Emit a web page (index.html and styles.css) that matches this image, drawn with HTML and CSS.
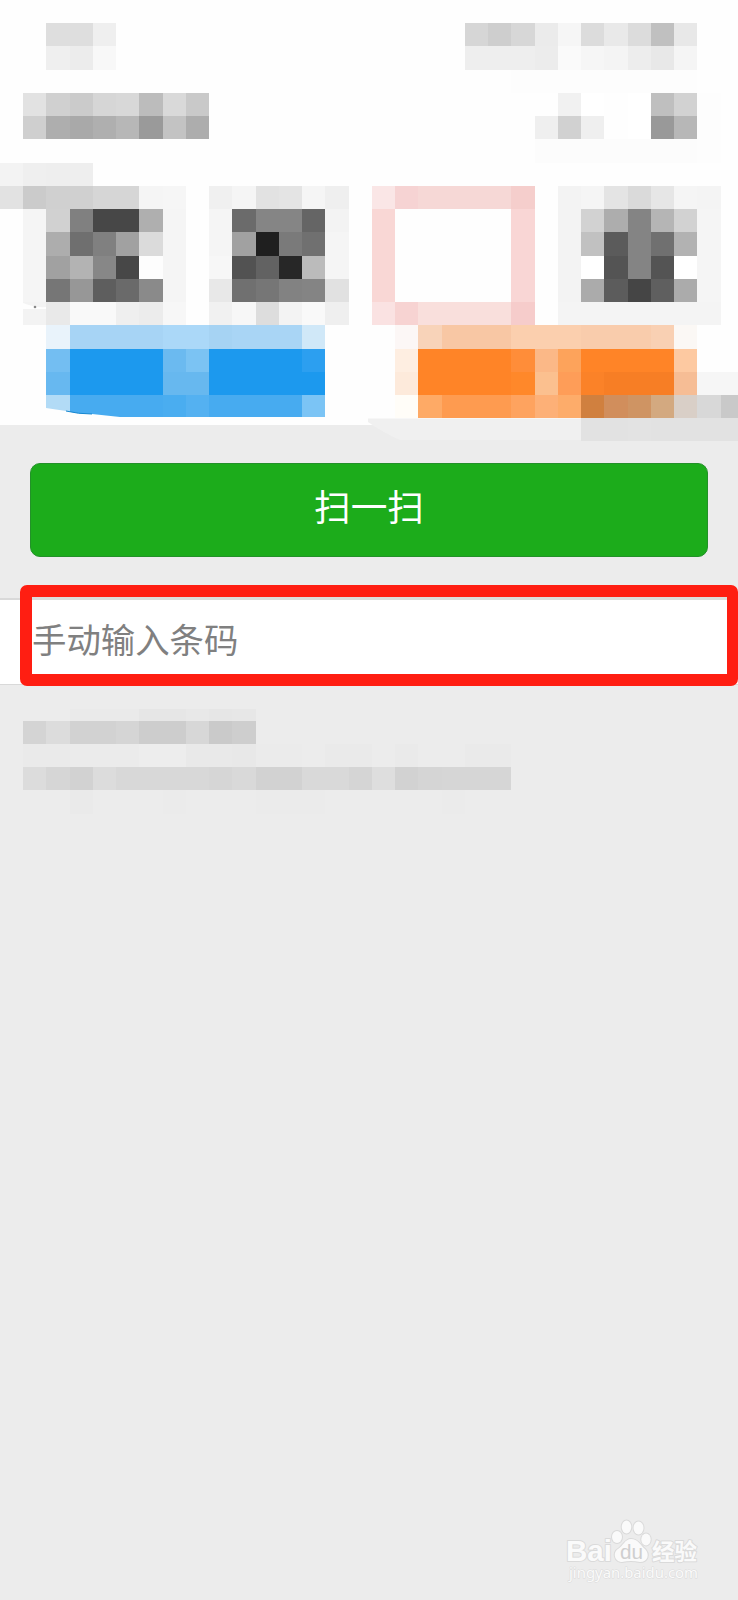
FILE: index.html
```
<!DOCTYPE html>
<html lang="zh-CN">
<head>
  <meta charset="UTF-8">
  <meta name="viewport" content="width=device-width, initial-scale=1.0">
  <title>扫一扫</title>
  <link rel="stylesheet" href="styles.css">
</head>
<body>
  <svg class="top-mosaic" width="738" height="441" viewBox="0 0 738 441">
    <rect width="738" height="425" fill="#fefefe"/>
    <path d="M368 418.500H738V440H400Q382 432 368 422Z" fill="#f0f0f0"/>
    <g id="top-cells" shape-rendering="crispEdges"></g>
    <path d="M23 303Q35 308 46 307V309H23Z" fill="#fefefe"/>
    <circle cx="35" cy="307" r="1.300" fill="#888"/>
    <path d="M46 408L66 411Q78 414 92 414L120 417H326V425H46Z" fill="#fefefe"/>
    <path d="M66 411Q78 414 92 414" fill="none" stroke="#1687d0" stroke-width="1"/>
  </svg>

  <button class="scan-button">扫一扫</button>

  <div class="barcode-row">
    <input type="text" class="barcode-input" placeholder="手动输入条码">
    <div class="highlight"></div>
  </div>

  <svg class="bottom-mosaic" width="738" height="120" viewBox="0 697 738 120">
    <g id="bottom-cells" shape-rendering="crispEdges"></g>
  </svg>

  <svg class="watermark" width="150" height="70" viewBox="0 0 150 70">
    <g fill="#fafafa" stroke="#dadada" stroke-width="2" paint-order="stroke" stroke-linejoin="round">
      <text class="logo-text" x="5" y="47" textLength="46" lengthAdjust="spacingAndGlyphs">Bai</text>
      <ellipse cx="56" cy="23" rx="5" ry="6"/>
      <ellipse cx="65.500" cy="13" rx="4.800" ry="6.500"/>
      <ellipse cx="77.500" cy="14" rx="5" ry="6.500"/>
      <ellipse cx="85" cy="25.500" rx="4.700" ry="6"/>
      <path d="M70 25C64 25 62 32 57 35C51 39 54 48 61 48Q70 46 79 48C87 48 89 40 84 35C79 31 77 25 70 25Z"/>
      <text class="logo-cn" x="91" y="46" textLength="45" lengthAdjust="spacingAndGlyphs">经验</text>
      <text class="logo-url" x="8" y="64" textLength="129" lengthAdjust="spacingAndGlyphs">jingyan.baidu.com</text>
    </g>
    <text class="logo-du" x="59" y="45" textLength="23" lengthAdjust="spacingAndGlyphs">du</text>
  </svg>

  <script>
    const CELL = 23.25;

    // row number: list of [first column, colours...]; two digits mean a grey
    const topRows = {
      1: ["2 de de ef", "20 d6 ce d7 eb f6 dc e9 dc c0 e8"],
      2: ["2 ef ec f8", "20 ee ee ee ec fa f6 f4 ed e8 f5"],
      3: ["22 fd fd fd fd fd fd fd fd"],
      4: ["1 e2 d0 cb d6 d8 bc d9 c9", "24 f1 ff fe ff bf d2 fd"],
      5: ["1 cf ae a9 af b7 9a c3 ad", "23 ef d1 ef fe ff 99 b7 fd"],
      6: ["23 fc fc fc fc fc fc fc fd"],
      7: ["0 f3 ef ee ee"],
      8: ["0 e2 cb d0 d0 d6 d6 f5 f6", "9 f0 f5 e2 e4 f5 ef", "16 fae6e6 f6d3d3 f6d8d6 f6d8d6 f6d8d6 f6d8d6 f5cecc", "24 f3 f5 e4 da e6 f5 f4"],
      9: ["1 f5 d1 80 47 47 af f5", "9 f5 6b 85 85 65 f3", "16 f9d7d5", "22 f9d6d5", "24 f3 d2 ad 84 b5 d2 f5"],
      10: ["1 f5 ad 6f 80 a1 db f5", "9 f5 a1 1f 7a 70 f5", "16 f9d7d5", "22 f9d6d5", "24 f3 c1 5b 84 70 b2 f5"],
      11: ["1 f5 a1 b3 87 47 fd f5", "9 f7 52 62 27 bb f5", "16 f9d7d5", "22 f9d6d5", "24 f3 ff 54 84 54 ff f5"],
      12: ["1 f5 76 97 5e 6a 8a f5", "9 e8 70 76 82 84 e1", "16 f9d7d5", "22 f9d6d5", "24 f3 ab 5c 45 5f ab f5"],
      13: ["1 f3 e9 f9 f9 ef ec f7", "9 f1 f7 dd f3 f9 ef", "16 fae2e2 f7d3d2 f9dfdc f9dfdc f9dfdc f9dfdc f6cccb", "24 f4 f4 f4 f4 f4 f4 f4"],
      14: ["2 e9f3fb a7d4f5 a7d4f5 a7d4f5 a7d4f5 abd8f8 abd8f8 a6d3f3 a9d5f5 a9d5f5 a9d5f5 d0e8f8", "17 fcf7f6 f8d3b9 f8c7a4 f8c7a4 f8c7a4 fbcfae fbcfae fbcfae f9ccac f9ccac f9ccac f9d0b3 fbf8f5"],
      15: ["2 73bef2 1c99ee 1c99ee 1c99ee 1c99ee 6bbaf0 7bc3f3 1c99ee 1c99ee 1c99ee 1c99ee 2c9ff0", "17 feeee1 ff8427 ff8427 ff8427 ff8427 ff8d39 fbb887 fda35b ff8427 ff8427 ff8427 ff8427 fdc9a1"],
      16: ["2 67b8f0 1c99ee 1c99ee 1c99ee 1c99ee 67b8ef 67b8ef 1c99ee 1c99ee 1c99ee 1c99ee 1c99ee", "17 fdeadb ff8427 ff8427 ff8427 ff8427 ff882a fbc08f fe9d58 fb8228 f77e25 f77e25 f77e25 f6bd95 f6 f6"],
      17: ["2 b2dbf6 47abf0 47abf0 47abf0 47abf0 4aadf0 54b1f1 47abf0 47abf0 47abf0 47abf0 7bc4f5", "17 fffdf8 feaa66 fe9b50 fe9b50 fe9b50 fea35f fdb077 fdac6a d0803f d18e5c cf9463 d3a980 d9cfc7 d8 c9"],
      18: ["25 e2 e2 e3 e2 e2 e2 e2"]
    };

    const bottomRows = {
      30.5: ["3 ea ea ea e6 e6 e8 e6 e7"],
      31: ["1 d4 dc d2 d2 d5 cd cd d7 ca ce"],
      32: ["1 ea ea eb eb eb ed ed e9 e9 e8 eb eb", "14 ea ea ec ea", "20 ea ea"],
      33: ["1 dc d6 d2 dc d8 d8 d8 d8 d6 d9 d2 d2 d9 d9 d5 de d2 d5 d6 d6 d6"],
      34: ["3 ea", "7 eb", "11 eb eb eb", "19 eb"]
    };

    // half pixels go down
    function snap(n) {
      return Math.round(n * CELL - 0.01);
    }

    function drawCells(id, rows) {
      let rects = "";
      Object.keys(rows).forEach(key => {
        const row = Number(key);
        const top = snap(row);
        const bottom = snap(Math.floor(row + 1));
        rows[key].forEach(run => {
          const parts = run.split(" ");
          const start = Number(parts.shift());
          parts.forEach((color, i) => {
            const left = snap(start + i);
            const right = snap(start + i + 1);
            const fill = color.length === 2 ? color.repeat(3) : color;
            rects += `<rect x="${left}" y="${top}" width="${right - left}" height="${bottom - top}" fill="#${fill}"/>`;
          });
        });
      });
      document.getElementById(id).innerHTML = rects;
    }

    drawCells("top-cells", topRows);
    drawCells("bottom-cells", bottomRows);
  </script>
</body>
</html>
```
FILE: styles.css
```
* {
  box-sizing: border-box;
}
body {
  margin: 0;
  min-height: 1600px;
  display: flex;
  flex-direction: column;
  background-color: #ececec;
  font-family: "Noto Sans CJK SC", sans-serif;
}
svg {
  display: block;
  flex-shrink: 0;
}
.scan-button {
  height: 94px;
  margin: 22px 30px 0;
  padding: 0 0 9px;
  border: 1px solid #239129;
  border-radius: 10px;
  background-color: #1cac1b;
  color: white;
  font-family: inherit;
  font-size: 36.7px;
  line-height: 1;
}
.barcode-row {
  position: relative;
  height: 87px;
  margin-top: 41px;
  border-top: 2px solid #d9d9d9;
  border-bottom: 1px solid #d9d9d9;
  background-color: white;
}
.barcode-input {
  display: block;
  width: 100%;
  height: 84px;
  padding: 0 32px 8px;
  border: none;
  outline: none;
  background: none;
  font-family: inherit;
  font-size: 34.4px;
}
.barcode-input::placeholder {
  color: #808080;
}
/* red frame lies over the input row */
.highlight {
  position: absolute;
  top: -15px;
  left: 20px;
  right: 0;
  height: 101px;
  border: 12px solid #ff1e12;
  border-right-width: 11px;
  border-radius: 7px;
  box-shadow: inset 0 3px #dcdcdc;
  pointer-events: none;
}
.bottom-mosaic {
  margin-top: 12px;
}
.watermark {
  margin: auto 27px 16px auto;
}
.logo-text {
  font-family: "Liberation Sans", sans-serif;
  font-size: 30px;
  font-weight: bold;
}
.logo-cn {
  font-size: 23px;
  font-weight: bold;
}
.logo-url {
  font-family: "Noto Sans", sans-serif;
  font-size: 15px;
  stroke-width: 1px;
}
.logo-du {
  font-family: "Liberation Sans", sans-serif;
  font-size: 20px;
  fill: #cfcfcf;
}
```
